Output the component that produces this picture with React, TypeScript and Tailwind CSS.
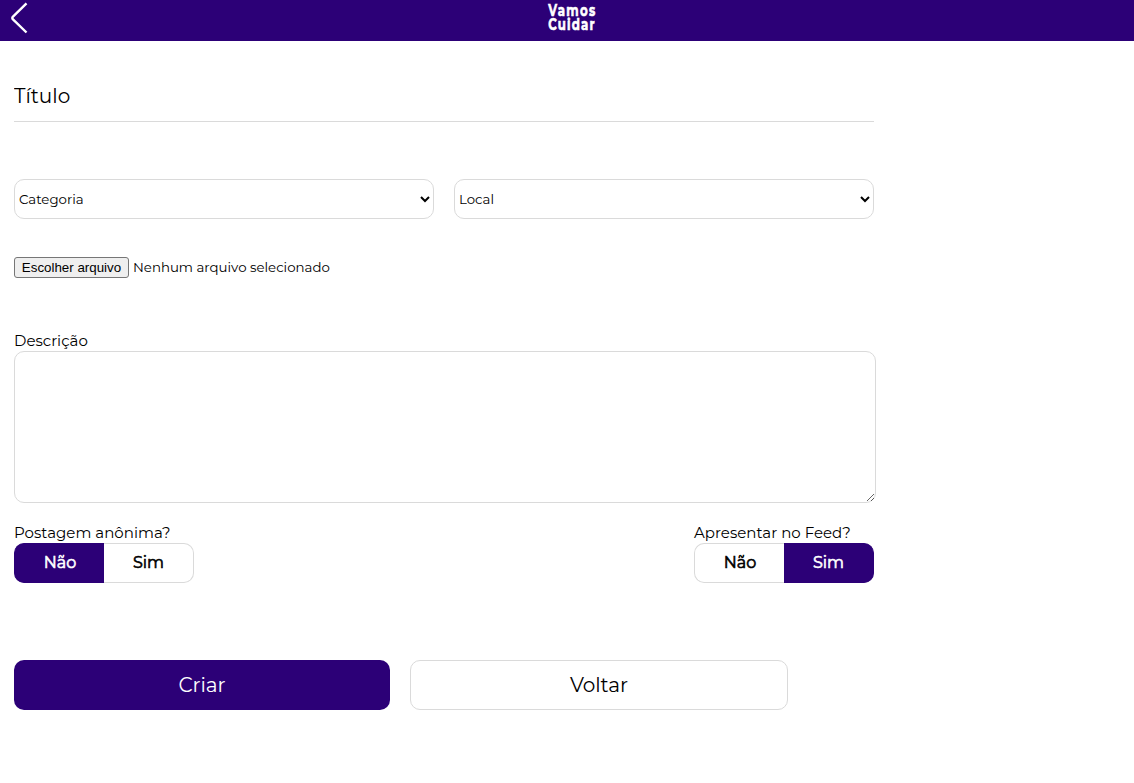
import { useState } from "react";

function BackIcon() {
  return (
    <svg width="18" height="32" viewBox="0 0 18 32" fill="none" stroke="#fff" strokeWidth="2.4">
      <path d="M16.5 1.3 L3 14.6 Q1.6 16 3 17.4 L16.5 30.5" />
    </svg>
  );
}

function Logo() {
  return (
    <svg
      className="overflow-visible fill-white stroke-white font-[Montserrat,'Open_Sans',sans-serif] text-[15.5px] font-bold"
      width="50"
      height="38"
      viewBox="0 0 50 38"
      strokeWidth="0.6"
      role="img"
      aria-label="Vamos Cuidar"
    >
      <g transform="scale(0.76 1)">
        <text x="1.6" y="16.5" textLength="62" lengthAdjust="spacing">Vamos</text>
        <text x="1.6" y="29.8" textLength="61" lengthAdjust="spacing">Cuidar</text>
      </g>
    </svg>
  );
}

function Choice({ label, initial }: { label: string; initial: string }) {
  const [value, setValue] = useState(initial);
  return (
    <div className="w-[180px]">
      <p className="whitespace-nowrap text-[15px] leading-[19px] tracking-[0.02px]">{label}</p>
      <div className="mt-px flex h-10">
        {["Não", "Sim"].map((option, i) => (
          <button
            key={option}
            type="button"
            onClick={() => setValue(option)}
            className={`w-[90px] border text-base font-normal [-webkit-text-stroke:0.6px_currentColor] ${
              i === 0 ? "rounded-l-[10px] border-r-0 pl-px" : "rounded-r-[10px] border-l-0"
            } ${value === option ? "border-[#2c0077] bg-[#2c0077] text-white" : "border-[#dadada] bg-white text-black"}`}
          >
            {option}
          </button>
        ))}
      </div>
    </div>
  );
}

export default function App() {
  return (
    <div className="min-h-[783px] bg-white font-[Montserrat,Inter,'Liberation_Sans',sans-serif] text-black">
      <header className="grid h-[41px] grid-cols-[1fr_50px_1fr] bg-[#2c0077]">
        <button type="button" aria-label="Voltar" className="flex items-start pl-2.5 pt-0.5">
          <BackIcon />
        </button>
        <div className="ml-[5px]">
          <Logo />
        </div>
      </header>
      <form className="ml-3.5 w-[860px] pt-[30px]" onSubmit={(e) => e.preventDefault()}>
        <input
          placeholder="Título"
          className="block h-[51px] w-full border-b border-[#dadada] text-xl placeholder:text-black"
        />
        <div className="mt-[57px] flex gap-5">
          <select className="h-10 w-[420px] rounded-[10px] border border-[#dadada] bg-white text-[13.33px]">
            <option>Categoria</option>
          </select>
          <select className="h-10 w-[420px] rounded-[10px] border border-[#dadada] bg-white text-[13.33px]">
            <option>Local</option>
          </select>
        </div>
        <div className="mt-[38px] flex h-[21px] items-center gap-1 text-[13.33px]">
          <button
            type="button"
            className="h-[21px] w-[115px] whitespace-nowrap rounded-[3px] border border-[#767676] bg-[#efefef] font-['Liberation_Sans',sans-serif] leading-[19px]"
          >
            Escolher arquivo
          </button>
          <span>Nenhum arquivo selecionado</span>
        </div>
        <label className="mt-[53px] block">
          <span className="block text-[15px] leading-5">Descrição</span>
          <textarea className="block h-[152px] w-[862px] resize rounded-[10px] border border-[#dadada]" />
        </label>
        <div className="mt-5 flex justify-between">
          <Choice label="Postagem anônima?" initial="Não" />
          <Choice label="Apresentar no Feed?" initial="Sim" />
        </div>
        <div className="mt-[77px] flex gap-5 text-xl">
          <button type="submit" className="h-[50px] w-[376px] rounded-[10px] bg-[#2c0077] text-white">
            Criar
          </button>
          <button type="button" className="h-[50px] w-[378px] rounded-[10px] border border-[#dadada]">
            Voltar
          </button>
        </div>
      </form>
    </div>
  );
}
